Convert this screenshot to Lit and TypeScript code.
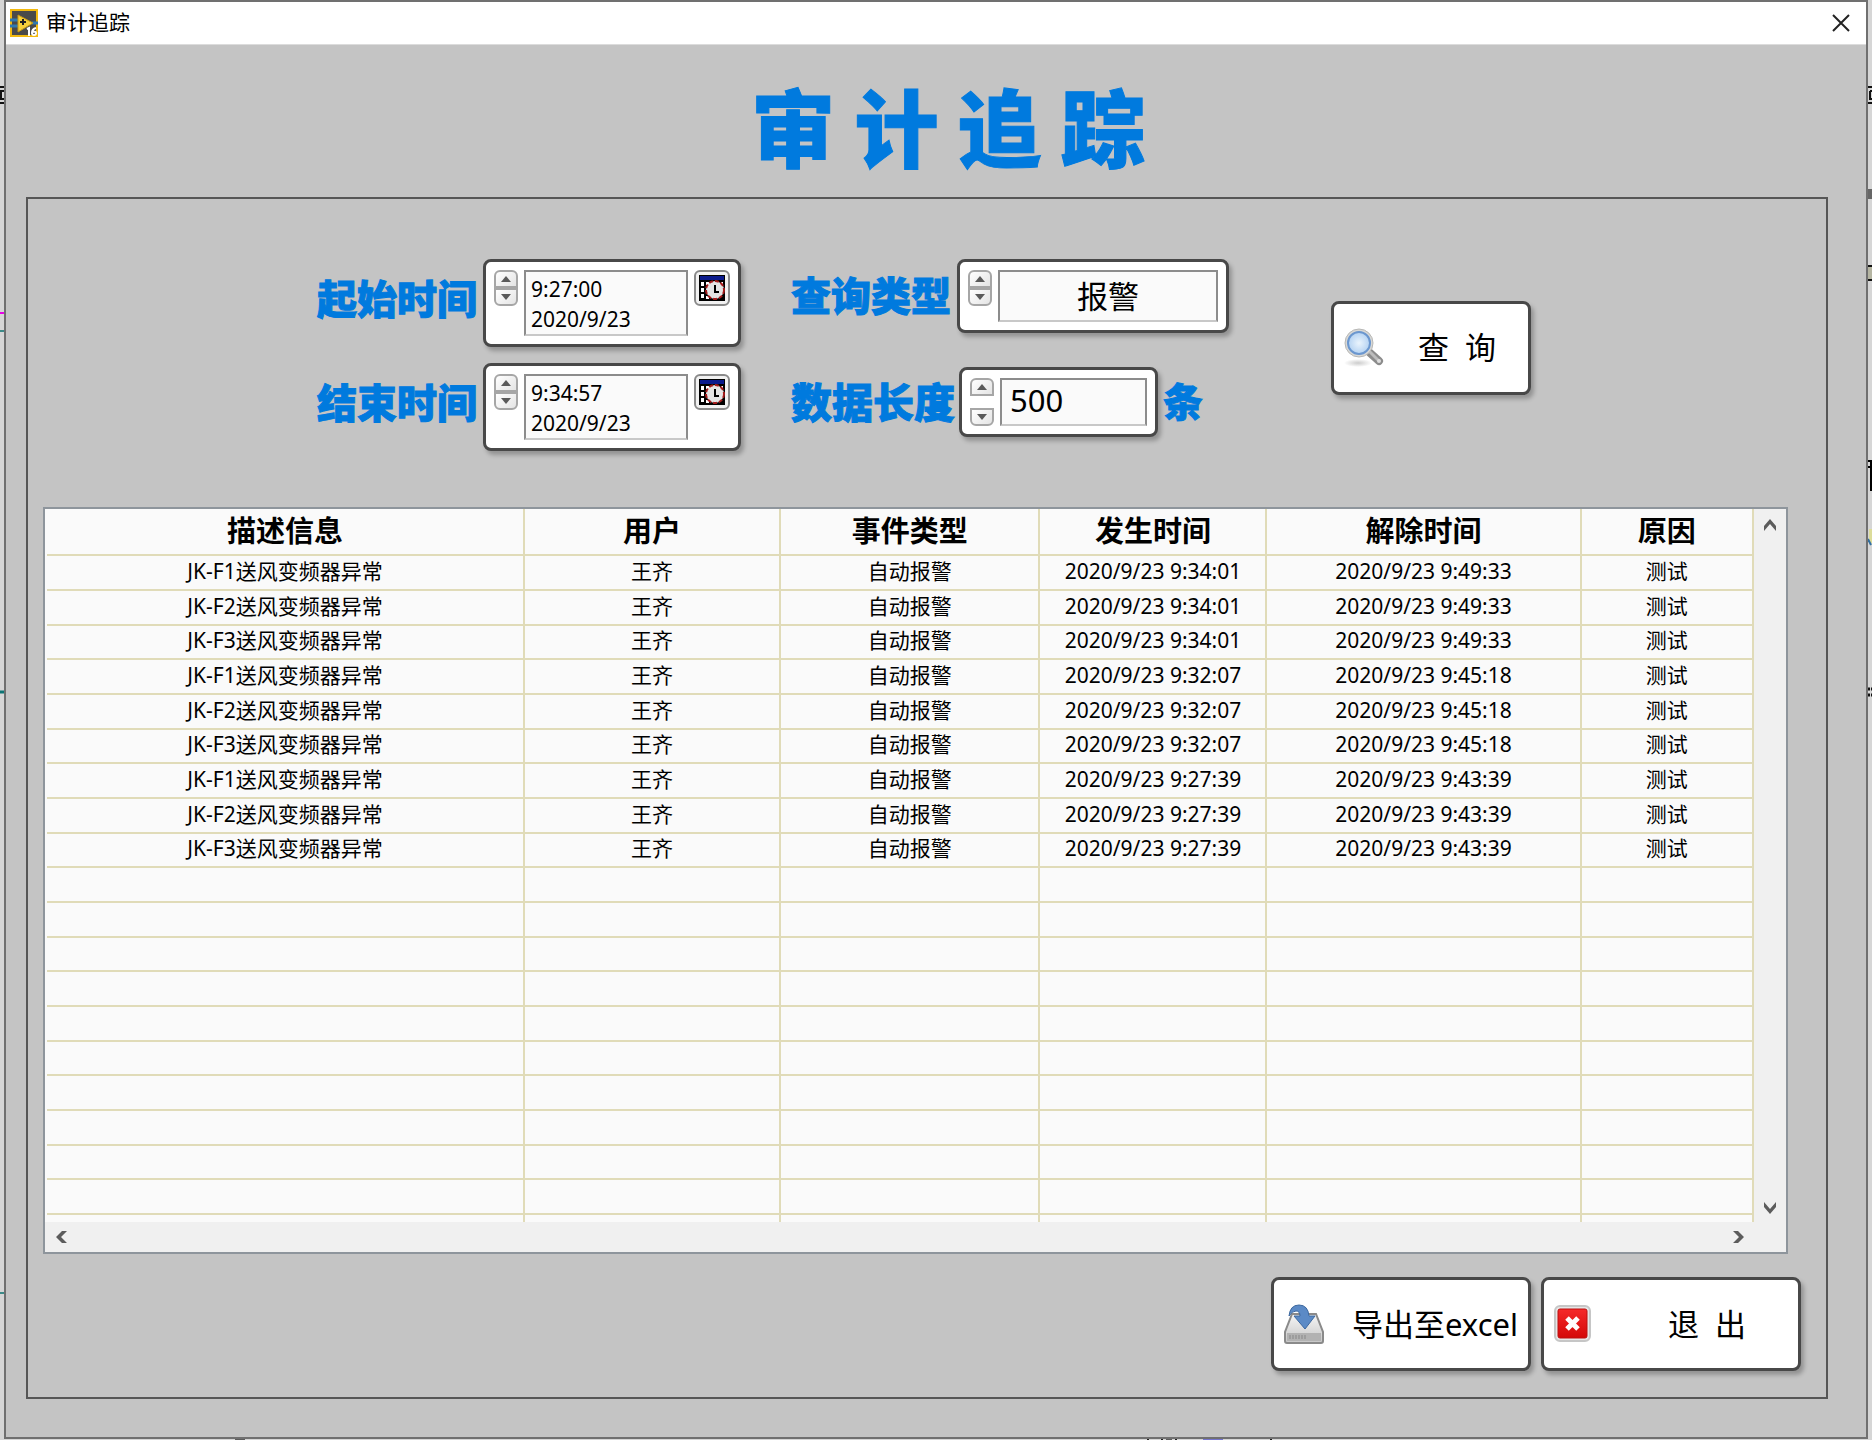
import { LitElement, html, css, svg } from "lit";
import { customElement, property, state } from "lit/decorators.js";

interface AuditRecord {
  info: string;
  user: string;
  kind: string;
  raised: string;
  cleared: string;
  reason: string;
}

const times: [string, string][] = [
  ["9:34:01", "9:49:33"],
  ["9:32:07", "9:45:18"],
  ["9:27:39", "9:43:39"],
];

const records: AuditRecord[] = times.flatMap(([raised, cleared]) =>
  ["F1", "F2", "F3"].map((unit) => ({
    info: `JK-${unit}送风变频器异常`,
    user: "王齐",
    kind: "自动报警",
    raised: `2020/9/23 ${raised}`,
    cleared: `2020/9/23 ${cleared}`,
    reason: "测试",
  }))
);

const EMPTY_ROWS = 10;

const controlStyles = css`
  :host {
    font-family: "Noto Sans", "Noto Sans CJK SC", sans-serif;
    color: #000;
  }
  button,
  input,
  textarea {
    font-family: inherit;
    color: inherit;
    margin: 0;
  }
  svg {
    display: block;
  }
`;

@customElement("spin-buttons")
class SpinButtons extends LitElement {
  @property({ type: Boolean, reflect: true }) spread = false;

  static styles = [
    controlStyles,
    css`
      :host {
        display: flex;
        flex-direction: column;
        width: 24px;
      }
      :host([spread]) {
        justify-content: space-between;
      }
      .step {
        box-sizing: border-box;
        display: grid;
        place-items: center;
        width: 24px;
        height: 18px;
        padding: 0;
        border: 2px solid #a6a6a6;
        background: linear-gradient(135deg, #fff, #e4e4e4);
      }
      .up {
        border-radius: 6px 6px 0 0;
      }
      .down {
        border-radius: 0 0 6px 6px;
      }
    `,
  ];

  render() {
    return html`
      <button class="step up" aria-label="增加">
        <svg width="10" height="6" viewBox="0 0 10 6"><path d="M5 0 10 6H0z" fill="#5a5a5a" /></svg>
      </button>
      <button class="step down" aria-label="减少">
        <svg width="10" height="6" viewBox="0 0 10 6"><path d="M0 0h10L5 6z" fill="#5a5a5a" /></svg>
      </button>
    `;
  }
}

@customElement("audit-table")
class AuditTable extends LitElement {
  @property({ attribute: false }) rows: AuditRecord[] = [];

  static styles = [
    controlStyles,
    css`
      :host {
        display: grid;
        grid-template-columns: 1fr 32px;
        grid-template-rows: auto 30px;
        border: 2px solid #8e959c;
        background: #fafafa;
      }
      .viewport {
        height: 713px;
        padding-left: 2px;
        overflow: hidden;
      }
      table {
        width: 100%;
        table-layout: fixed;
        border-collapse: separate;
        border-spacing: 0;
        font-size: 21px;
        line-height: 28px;
      }
      .c-info { width: 28%; }
      .c-user { width: 15%; }
      .c-kind { width: 15.2%; }
      .c-raised { width: 13.3%; }
      .c-cleared { width: 18.4%; }
      th,
      td {
        box-sizing: border-box;
        height: 35px;
        padding: 0 0 4px;
        border-right: 2px solid #e0dbb8;
        border-bottom: 2px solid #e0dbb8;
        text-align: center;
        font-weight: 400;
        white-space: nowrap;
        overflow: hidden;
      }
      tbody tr:nth-child(3n) td {
        height: 34px;
      }
      th {
        height: 47px;
        padding-bottom: 2px;
        font-size: 29px;
        line-height: 40px;
        font-weight: 700;
      }
      .last td {
        border-bottom: 0;
      }
      .bar {
        display: flex;
        align-items: center;
        justify-content: space-between;
        background: #f0f0f0;
      }
      .vertical {
        flex-direction: column;
        padding: 6px 0 4px;
      }
      .horizontal {
        padding: 0 4px;
      }
      .corner {
        background: #f0f0f0;
      }
      .arrow {
        display: grid;
        place-items: center;
        width: 24px;
        height: 20px;
        padding: 0;
        border: 0;
        background: none;
      }
    `,
  ];

  private arrow(label: string, d: string) {
    return html`<button class="arrow" aria-label=${label}>
      <svg width="16" height="16" viewBox="0 0 16 16">
        <path d=${d} fill="#5c5c5c" />
      </svg>
    </button>`;
  }

  render() {
    return html`
      <div class="viewport">
        <table>
          <colgroup>
            <col class="c-info" /><col class="c-user" /><col class="c-kind" />
            <col class="c-raised" /><col class="c-cleared" /><col />
          </colgroup>
          <thead>
            <tr>
              <th scope="col">描述信息</th>
              <th scope="col">用户</th>
              <th scope="col">事件类型</th>
              <th scope="col">发生时间</th>
              <th scope="col">解除时间</th>
              <th scope="col">原因</th>
            </tr>
          </thead>
          <tbody>
            ${this.rows.map(
              (r) => html`<tr>
                <td>${r.info}</td>
                <td>${r.user}</td>
                <td>${r.kind}</td>
                <td>${r.raised}</td>
                <td>${r.cleared}</td>
                <td>${r.reason}</td>
              </tr>`
            )}
            ${Array.from(
              { length: EMPTY_ROWS + 1 },
              (_, i) => html`<tr class=${i === EMPTY_ROWS ? "last" : ""}>
                <td></td><td></td><td></td><td></td><td></td><td></td>
              </tr>`
            )}
          </tbody>
        </table>
      </div>
      <div class="bar vertical">
        ${this.arrow("向上滚动", "M8 2 14 9v5L8 7 2 14V9z")}
        ${this.arrow("向下滚动", "M8 14 14 7V2L8 9 2 2v5z")}
      </div>
      <div class="bar horizontal">
        ${this.arrow("向左滚动", "M3 8 9 2h5L8 8l6 6H9z")}
        ${this.arrow("向右滚动", "M14 8 8 2H3l6 6-6 6h5z")}
      </div>
      <div class="corner"></div>
    `;
  }
}

const appIcon = svg`
  <rect x="1" y="1" width="26" height="26" fill="#4a4a4a" stroke="#f2b90f" stroke-width="2"/>
  <path d="M0 11h8M0 17h8M22 14h6" stroke="#2f78b0" stroke-width="3"/>
  <path d="M8 6v17l15-9z" fill="#f7cf3c" stroke="#c99a10"/>
  <path d="M10 13h6M13 10v6" stroke="#222" stroke-width="2"/>
  <path d="M17 20l2-1v8M26 19q-4 1-4 5 0 2 2 2 2 0 2-2t-4-1" fill="none" stroke="#fff" stroke-width="2"/>`;

const calendarIcon = svg`
  <path d="M0 0h26v26H0z" fill="#000"/>
  <path d="M1 1h24v4H1z" fill="#0a1a8c"/>
  <path d="M2 7h3v4H2zM7 7h4v3H7zM2 13h3v4H2zM2 19h3v4H2zM7 21h3v3H7zM22 7h2v3h-2z" fill="#fff"/>
  <circle cx="16" cy="15" r="9" fill="#e4e4e4" stroke="#a51c1c" stroke-width="2" stroke-dasharray="4 2"/>
  <path d="M16 10v7h4" fill="none" stroke="#000" stroke-width="2"/>`;

const searchIcon = svg`
  <defs>
    <radialGradient id="lens"><stop offset="0" stop-color="#eaf4fd"/><stop offset="1" stop-color="#b4d2f2"/></radialGradient>
    <radialGradient id="ground"><stop offset="0" stop-color="#ccc"/><stop offset="1" stop-color="#fff"/></radialGradient>
  </defs>
  <ellipse cx="14" cy="35" rx="14" ry="4" fill="url(#ground)"/>
  <path d="M25 24 35 33" stroke="#8c8c8c" stroke-width="8" stroke-linecap="round"/>
  <path d="M25 23 34 32" stroke="#bcbcbc" stroke-width="3" stroke-linecap="round"/>
  <circle cx="35" cy="33" r="2" fill="#dedede"/>
  <circle cx="15" cy="15" r="14" fill="#d8d8d6" stroke="#b8b8b6"/>
  <circle cx="15" cy="15" r="11" fill="url(#lens)" stroke="#6b97cf" stroke-width="2"/>`;

const exportIcon = svg`
  <defs>
    <linearGradient id="disk" x1="0" y1="0" x2="0" y2="1"><stop offset="0" stop-color="#f6f6f6"/><stop offset="1" stop-color="#c6c6c6"/></linearGradient>
  </defs>
  <path d="M8 10h24l7 18v9q0 2-2 2H3q-2 0-2-2v-9z" fill="url(#disk)" stroke="#8a8a8a" stroke-width="2"/>
  <path d="M3 29h34v8H3z" fill="#b2b2b2"/>
  <path d="M6 31v4M9 31v4M12 31v4M15 31v4M18 31v4M21 31v4" stroke="#888"/>
  <path d="M5 12Q6 1 15 1q9 0 10 11h6L21 25 10 12h6q0-5-4-5-4 0-7 5z" fill="#5b8ac6" stroke="#3c689f"/>`;

const exitIcon = svg`
  <defs>
    <linearGradient id="stop" x1="0" y1="0" x2="0" y2="1"><stop offset="0" stop-color="#f52a2a"/><stop offset="1" stop-color="#d40808"/></linearGradient>
  </defs>
  <rect x="1" y="1" width="35" height="35" rx="5" fill="#e6e6e6" stroke="#c6c6c6" stroke-width="2"/>
  <rect x="4" y="4" width="29" height="29" rx="2" fill="url(#stop)" stroke="#bd1010"/>
  <path d="M13 13 24 24M24 13 13 24" stroke="#fff" stroke-width="5"/>`;

@customElement("app-root")
class AppRoot extends LitElement {
  @state() private rows = records;

  static styles = [
    controlStyles,
    css`
      :host {
        display: grid;
        grid-template-columns: 4px minmax(0, 1fr) 4px;
        grid-template-rows: minmax(0, auto) 1fr;
        min-height: 100vh;
        overflow: hidden;
        background: #d6d6d6;
      }
      .edge {
        grid-row: 1;
      }
      .window {
        grid-column: 2;
        grid-row: 1;
        border: 2px solid #707070;
        background: #c4c4c4;
      }
      .below {
        grid-column: 2;
        grid-row: 2;
      }
      .titlebar {
        display: flex;
        align-items: center;
        height: 42px;
        padding: 0 16px 0 4px;
        background: #fff;
        border-bottom: 1px solid #dcdcdc;
      }
      .caption {
        flex: 1;
        padding: 0 0 2px 8px;
        font-size: 21px;
        line-height: 30px;
      }
      .close {
        padding: 0;
        border: 0;
        background: none;
      }
      h1 {
        margin: 0;
        padding: 20px 0 12px 24px;
        text-align: center;
        font-family: "Noto Sans CJK SC", sans-serif;
        font-size: 84px;
        line-height: 120px;
        font-weight: 900;
        color: #007ade;
        -webkit-text-stroke: 1px #007ade;
      }
      .panel {
        margin: 0 38px 38px 20px;
        padding: 60px 25px 26px 15px;
        border: 2px solid #565656;
      }
      .filters {
        display: flex;
        align-items: flex-start;
        padding: 0 0 56px 274px;
      }
      .column {
        display: flex;
        flex-direction: column;
      }
      .dates {
        gap: 16px;
        margin-right: 50px;
      }
      .options {
        gap: 34px;
      }
      .field {
        display: flex;
        align-items: center;
      }
      .label {
        flex: none;
        font-family: "Noto Sans CJK SC", sans-serif;
        font-size: 40px;
        line-height: 48px;
        font-weight: 900;
        white-space: nowrap;
        color: #007ade;
        -webkit-text-stroke: 1px #007ade;
      }
      .dates .label {
        width: 166px;
        padding-bottom: 12px;
      }
      .options .label {
        padding-bottom: 4px;
      }
      .options .start {
        min-width: 166px;
      }
      .options .wide {
        width: 168px;
        font-size: 41px;
      }
      .box,
      .action {
        box-sizing: border-box;
        border: 3px solid #484848;
        border-radius: 8px;
        background: #fff;
        box-shadow: 3px 4px 4px rgba(0, 0, 0, 0.25);
      }
      .box {
        display: flex;
        align-items: flex-start;
        gap: 6px;
        padding: 8px;
      }
      .date {
        width: 258px;
        height: 88px;
      }
      .type {
        width: 272px;
        height: 74px;
      }
      .count {
        width: 199px;
        height: 70px;
      }
      .count spin-buttons {
        height: 100%;
      }
      .value {
        box-sizing: border-box;
        flex: 1;
        min-width: 0;
        height: 100%;
        padding: 0 8px 4px;
        border: 2px solid #8c8c8c;
        border-bottom-color: #c8c8c8;
        border-radius: 0;
        outline: 0;
        background: #fafafa;
        font-size: 31px;
        resize: none;
        overflow: hidden;
      }
      .stamp {
        padding: 2px 5px;
        font-size: 21px;
        line-height: 30px;
      }
      .centered {
        text-align: center;
      }
      .calendar {
        display: grid;
        place-items: center;
        flex: none;
        box-sizing: border-box;
        width: 36px;
        height: 36px;
        padding: 0;
        border: 2px solid #8a8a8a;
        border-radius: 6px;
        background: #f2f2f2;
      }
      .unit {
        padding-left: 5px;
      }
      .action {
        display: flex;
        align-items: center;
        height: 94px;
        padding: 0 10px;
        font-size: 31px;
        line-height: 44px;
        white-space: pre;
      }
      .query {
        width: 200px;
        margin: 42px 0 0 102px;
      }
      .query .text {
        padding: 0 0 2px 34px;
      }
      .actions {
        display: flex;
        justify-content: flex-end;
        gap: 10px;
        padding-top: 23px;
      }
      .actions .action {
        width: 260px;
        justify-content: space-between;
      }
      .exit .text {
        padding-right: 42px;
      }
      audit-table {
        margin-right: 13px;
      }
      .below svg {
        width: 100%;
      }
    `,
  ];

  private dateField(id: string, label: string, time: string) {
    return html`<div class="field">
      <label class="label" for=${id}>${label}</label>
      <div class="box date">
        <spin-buttons></spin-buttons>
        <textarea class="value stamp" id=${id} rows="2" .value=${`${time}\n2020/9/23`}></textarea>
        <button class="calendar" aria-label="选择日期">
          <svg width="26" height="26" viewBox="0 0 26 26">${calendarIcon}</svg>
        </button>
      </div>
    </div>`;
  }

  render() {
    return html`
      <svg class="edge" width="4" height="1400" viewBox="0 0 4 1400" aria-hidden="true">
        <path d="M0 87h4M0 91h4M0 99h4M0 103h4M1 91v9" stroke="#111" stroke-width="2" fill="none" />
        <path d="M0 313h4" stroke="#e800e8" stroke-width="2" />
        <path d="M0 331h4M0 1293h4" stroke="#3c8a88" stroke-width="2" />
        <path d="M0 692h4" stroke="#0c7474" stroke-width="3" />
      </svg>
      <div class="window">
        <header class="titlebar">
          <svg width="28" height="28" viewBox="0 0 28 28">${appIcon}</svg>
          <span class="caption">审计追踪</span>
          <button class="close" aria-label="关闭">
            <svg width="18" height="18" viewBox="0 0 18 18">
              <path d="M1 1 17 17M17 1 1 17" stroke="#222" stroke-width="2" />
            </svg>
          </button>
        </header>
        <h1>审 计 追 踪</h1>
        <main class="panel">
          <div class="filters">
            <div class="column dates">
              ${this.dateField("from", "起始时间", "9:27:00")}
              ${this.dateField("to", "结束时间", "9:34:57")}
            </div>
            <div class="column options">
              <div class="field">
                <label class="label start" for="type">查询类型</label>
                <div class="box type">
                  <spin-buttons></spin-buttons>
                  <input class="value centered" id="type" type="text" .value=${"报警"} />
                </div>
              </div>
              <div class="field">
                <label class="label wide" for="count">数据长度</label>
                <div class="box count">
                  <spin-buttons spread></spin-buttons>
                  <input class="value" id="count" type="text" inputmode="numeric" .value=${"500"} />
                </div>
                <span class="label unit">条</span>
              </div>
            </div>
            <button class="action query">
              <svg width="40" height="40" viewBox="0 0 40 40">${searchIcon}</svg>
              <span class="text">查  询</span>
            </button>
          </div>
          <audit-table .rows=${this.rows}></audit-table>
          <div class="actions">
            <button class="action">
              <svg width="40" height="40" viewBox="0 0 40 40">${exportIcon}</svg>
              <span class="text">导出至excel</span>
            </button>
            <button class="action exit">
              <svg width="38" height="38" viewBox="0 0 38 38">${exitIcon}</svg>
              <span class="text">退  出</span>
            </button>
          </div>
        </main>
      </div>
      <svg class="edge" width="4" height="1400" viewBox="0 0 4 1400" aria-hidden="true">
        <path d="M0 87h4M0 103h4M2 91v9M2 91h2M2 99h2" stroke="#111" stroke-width="2" fill="none" />
        <path d="M0 189h4v10H0z" fill="#666" />
        <path d="M0 267h4v13H0z" fill="#b5b5a2" />
        <path d="M0 266h4M0 280h4" stroke="#111" stroke-width="2" />
        <path d="M0 461h4M3 461v30M0 467h2" stroke="#000" stroke-width="2" />
        <path d="M1 529h3v14H1z" fill="#dcdc9a" />
        <path d="M0 539l3 6" stroke="#3370a0" stroke-width="2" />
        <path d="M0 689h4M0 695h4" stroke="#111" stroke-width="3" stroke-dasharray="2 1" />
      </svg>
      <div class="below">
        <svg height="4" aria-hidden="true">
          <path d="M231 0h10v4h-10zM1162 0h6v4h-6z" fill="#5e5e5e" />
          <path d="M1144 0v4M1158 0v4M1172 0v4M1267 0v4" stroke="#222" stroke-width="2" />
          <path d="M1199 1h20M1223 2h16M1230 1v3M1206 3h8" stroke="#1414c8" stroke-width="1" />
        </svg>
      </div>
    `;
  }
}
